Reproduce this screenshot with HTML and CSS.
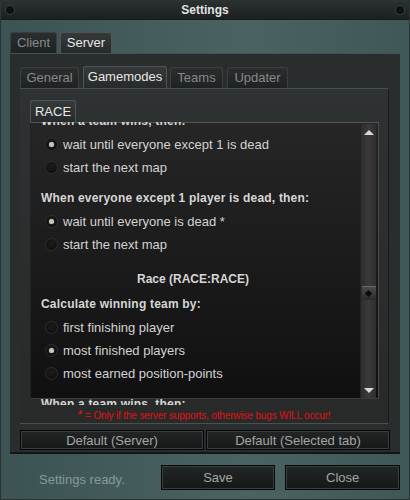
FILE: index.html
```html
<!DOCTYPE html>
<html lang="en">
<head>
  <meta charset="UTF-8" />
  <title>Settings</title>
  <link rel="stylesheet" href="styles.css">
</head>
<body>

  <div class="window">
    <div class="titlebar">
      <span class="dot"></span>
      <span class="title">Settings</span>
      <span class="dot"></span>
    </div>

    <div class="body">
      <div class="tabs outer-tabs">
        <div class="tab tab-client">Client</div>
        <div class="tab tab-server active">Server</div>
      </div>

      <div class="panel outer">
        <div class="tabs inner-tabs">
          <div class="tab tab-general">General</div>
          <div class="tab tab-gamemodes active">Gamemodes</div>
          <div class="tab tab-teams">Teams</div>
          <div class="tab tab-updater">Updater</div>
        </div>

        <div class="panel inner">
          <div class="tab race-tab active">RACE</div>

          <div class="pane-clip">
            <div class="pane-bg">
              <div class="scrollbar">
                <span class="arrow up"></span>
                <span class="thumb"><span class="diamond"></span></span>
                <span class="arrow down"></span>
              </div>
            </div>

            <div class="pane-content">
              <div class="row heading first">When a team wins, then:</div>
              <div class="row radio checked"><span class="circle"></span>wait until everyone except 1 is dead</div>
              <div class="row radio"><span class="circle"></span>start the next map</div>

              <div class="row heading gap">When everyone except 1 player is dead, then:</div>
              <div class="row radio checked"><span class="circle"></span>wait until everyone is dead *</div>
              <div class="row radio"><span class="circle"></span>start the next map</div>

              <div class="row mode-title">Race (RACE:RACE)</div>

              <div class="row heading">Calculate winning team by:</div>
              <div class="row radio"><span class="circle"></span>first finishing player</div>
              <div class="row radio checked"><span class="circle"></span>most finished players</div>
              <div class="row radio"><span class="circle"></span>most earned position-points</div>

              <div class="row heading gap">When a team wins, then:</div>
            </div>
          </div>

          <div class="note"><span class="star">*</span> = Only if the server supports, otherwise bugs WILL occur!</div>
        </div>

        <div class="defaults">
          <button class="btn">Default (Server)</button>
          <button class="btn">Default (Selected tab)</button>
        </div>
      </div>

      <div class="footer">
        <span class="status">Settings ready.</span>
        <button class="btn big">Save</button>
        <button class="btn big">Close</button>
      </div>
    </div>
  </div>

</body>
</html>
```

FILE: styles.css
```css
body {
  margin: 0;
  background: #1a1f1f;
  font-family: "Liberation Sans", Arial, sans-serif;
  font-size: 13px;
}
.window {
  width: 410px;
  height: 500px;
  box-sizing: border-box;
  border: 1px solid #2a3434;
  background: linear-gradient(to right, #3b5353, #4a6262 60%, #3f5757);
  display: flex;
  flex-direction: column;
}
.titlebar {
  height: 18px;
  background: linear-gradient(to bottom, #2b3030, #1c2020);
  border-bottom: 1px solid #151919;
  display: flex;
  align-items: center;
  justify-content: space-between;
  padding: 0 5px 0 5px;
}
.title {
  color: #e2e2e2;
  font-weight: bold;
  font-size: 12px;
}
.dot {
  width: 8px;
  height: 8px;
  border-radius: 50%;
  background: #0e1111;
  box-shadow: 0 0 0 1px #384040;
}
.body {
  padding: 12px 9px 0 9px;
  flex: 1;
}

/* tabs */
.tabs {
  display: flex;
  align-items: flex-end;
}
.tab {
  box-sizing: border-box;
  background: linear-gradient(to bottom, #2a2e2e, #1f2222);
  border: 1px solid #3a3f3f;
  border-bottom: none;
  border-radius: 3px 3px 0 0;
  color: #888;
  text-align: center;
  line-height: 20px;
}
.tab.active {
  background: linear-gradient(to bottom, #353939, #272a2a);
  border-color: #4f5555;
  color: #e8e8e8;
}
.outer-tabs {
  height: 21px;
  gap: 3px;
}
.tab-client { width: 47px; height: 21px; }
.tab-server { width: 52px; height: 21px; }
.inner-tabs {
  height: 22px;
  gap: 3px;
}
.tab-general { width: 59px; height: 21px; }
.tab-gamemodes { width: 84px; height: 22px; margin-left: 1px; }
.tab-teams { width: 53px; height: 21px; }
.tab-updater { width: 61px; height: 21px; margin-left: 1px; }

/* panels */
.panel {
  box-sizing: border-box;
}
.outer {
  width: 390px;
  height: 401px;
  background: #2a2d2d;
  border-top: 1px solid #4a5050;
  border-bottom: 2px solid #141616;
  padding: 12px 10px 0 10px;
}
.inner {
  width: 369px;
  height: 336px;
  background: linear-gradient(to bottom, #2f3232, #282a2a);
  border-top: 1px solid #4a4f4f;
  border-right: 1px solid #1a1c1c;
  border-bottom: 1px solid #4a4f4f;
  padding: 11px 0 0 10px;
}
.race-tab {
  width: 46px;
  height: 22px;
  line-height: 22px;
}

/* scroll pane */
.pane-clip {
  display: grid;
  grid-template-rows: 283px;
  width: 349px;
  overflow: hidden;
}
.pane-bg, .pane-content {
  grid-area: 1 / 1;
}
.pane-bg {
  align-self: start;
  box-sizing: border-box;
  height: 277px;
  background: linear-gradient(to bottom, #262626, #101010);
  border-top: 1px solid #555;
  border-right: 1px solid #4a4a4a;
  border-bottom: 1px solid #3c3c3c;
  border-left: 1px solid #222;
  display: flex;
  justify-content: flex-end;
  padding: 1px 2px 0 0;
}
.scrollbar {
  width: 15px;
  height: 274px;
  background: linear-gradient(to right, #2e2e2e, #3a3a3a 50%, #2e2e2e);
  border-left: 1px solid #232323;
  display: flex;
  flex-direction: column;
  align-items: center;
}
.arrow {
  width: 0;
  height: 0;
  border-left: 5px solid transparent;
  border-right: 5px solid transparent;
}
.arrow.up {
  margin-top: 6px;
  border-bottom: 5px solid #d8d8d8;
}
.arrow.down {
  margin-top: auto;
  margin-bottom: 5px;
  border-top: 5px solid #d8d8d8;
}
.thumb {
  margin-top: 151px;
  width: 14px;
  height: 13px;
  background: linear-gradient(to bottom, #4a4a4a, #2a2a2a);
  border-top: 1px solid #666;
  display: flex;
  align-items: center;
  justify-content: center;
}
.diamond {
  width: 5px;
  height: 5px;
  background: #0a0a0a;
  transform: rotate(45deg);
}
.pane-content {
  align-self: start;
  margin-top: -12px;
  padding-left: 11px;
  color: #d2d2d2;
}
.row {
  height: 23px;
  line-height: 23px;
  white-space: nowrap;
}
.heading {
  font-weight: bold;
  font-size: 12px;
  color: #d6d6d6;
  letter-spacing: 0.2px;
}
.heading.gap {
  margin-top: 8px;
}
.mode-title {
  margin-top: 12px;
  margin-bottom: 2px;
  font-weight: bold;
  font-size: 12px;
  color: #d6d6d6;
  text-align: center;
  padding-right: 34px;
}
.radio {
  display: flex;
  align-items: center;
  padding-left: 5px;
  color: #d2d2d2;
}
.circle {
  width: 13px;
  height: 13px;
  box-sizing: border-box;
  border-radius: 50%;
  background: radial-gradient(circle at 50% 40%, #1c1c1c, #0c0c0c);
  border: 1px solid #2f2f2f;
  margin-right: 5px;
  margin-left: -1px;
  display: flex;
  align-items: center;
  justify-content: center;
}
.radio.checked .circle::after {
  content: "";
  width: 5px;
  height: 5px;
  border-radius: 50%;
  background: #c4c4c4;
  box-shadow: 0 0 1px #888;
}

/* note and buttons */
.note {
  margin-top: 2px;
  color: #e01010;
  font-size: 10px;
  letter-spacing: -0.15px;
  text-align: center;
  padding-right: 10px;
}
.star {
  font-size: 13px;
}
.defaults {
  display: flex;
  gap: 2px;
  margin-top: 6px;
}
.btn {
  box-sizing: border-box;
  font-family: "Liberation Sans", Arial, sans-serif;
  font-size: 13px;
  color: #a5a5a5;
  background: linear-gradient(to bottom, #232626, #161818);
  border: 1px solid #050606;
  box-shadow: inset 0 0 0 1px #3a3e3e;
  padding: 0;
}
.defaults .btn {
  width: 184px;
  height: 20px;
}
.footer {
  display: flex;
  align-items: center;
  margin-top: 11px;
}
.status {
  color: #879a9a;
  font-size: 13px;
  width: 121px;
  padding-left: 29px;
  box-sizing: border-box;
  margin-top: 4px;
}
.btn.big {
  width: 115px;
  height: 25px;
  margin-left: 10px;
}
.btn.big:first-of-type {
  margin-left: 30px;
}
```
